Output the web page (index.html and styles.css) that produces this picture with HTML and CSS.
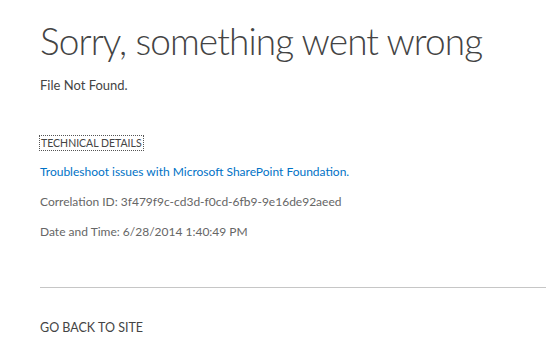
FILE: index.html
```html
<!DOCTYPE html>
<html lang="en">
<head>
    <meta charset="UTF-8">
    <title>Error</title>
    <link rel="stylesheet" href="styles.css">
</head>
<body>
    <div class="error-page">
        <h1 class="page-title">Sorry, something went wrong</h1>
        <div class="error-message">File Not Found.</div>

        <div class="details">
            <div class="details-head">
                <a href="#" class="details-toggle">TECHNICAL DETAILS</a>
            </div>
            <div class="details-row">
                <a href="#" class="help-link">Troubleshoot issues with Microsoft SharePoint Foundation.</a>
            </div>
            <div class="details-row muted">Correlation ID: 3f479f9c-cd3d-f0cd-6fb9-9e16de92aeed</div>
            <div class="details-row muted">Date and Time: 6/28/2014 1:40:49 PM</div>
        </div>

        <hr class="divider">

        <a href="#" class="back-link">GO BACK TO SITE</a>
    </div>
</body>
</html>
```

FILE: styles.css
```css
* {
    box-sizing: border-box;
    margin: 0;
    padding: 0;
}
body {
    background-color: #ffffff;
    font-family: 'Lato', 'Liberation Sans', sans-serif;
    font-size: 13px;
    color: #444444;
}
a {
    text-decoration: none;
}
.error-page {
    padding: 16px 0 0 40px;
}
.page-title {
    font-weight: 300;
    font-size: 37px;
    line-height: 50px;
    letter-spacing: -0.9px;
    color: #444444;
    white-space: nowrap;
}
.error-message {
    margin-top: 9px;
    line-height: 20px;
}
.details {
    margin-top: 41px;
}
.details-head {
    display: flex;
}
.details-toggle {
    color: #444444;
    font-size: 10.5px;
    line-height: 14px;
    padding: 0 1px;
    outline: 1px dotted #555555;
}
.details-row {
    margin-top: 13px;
    line-height: 17px;
    font-size: 12px;
}
.help-link {
    color: #0072c6;
}
.muted {
    color: #666666;
}
.divider {
    border: none;
    border-top: 1px solid #c6c6c6;
    margin-top: 47px;
}
.back-link {
    display: block;
    margin-top: 31px;
    font-size: 12.5px;
    color: #444444;
    line-height: 17px;
}
```
